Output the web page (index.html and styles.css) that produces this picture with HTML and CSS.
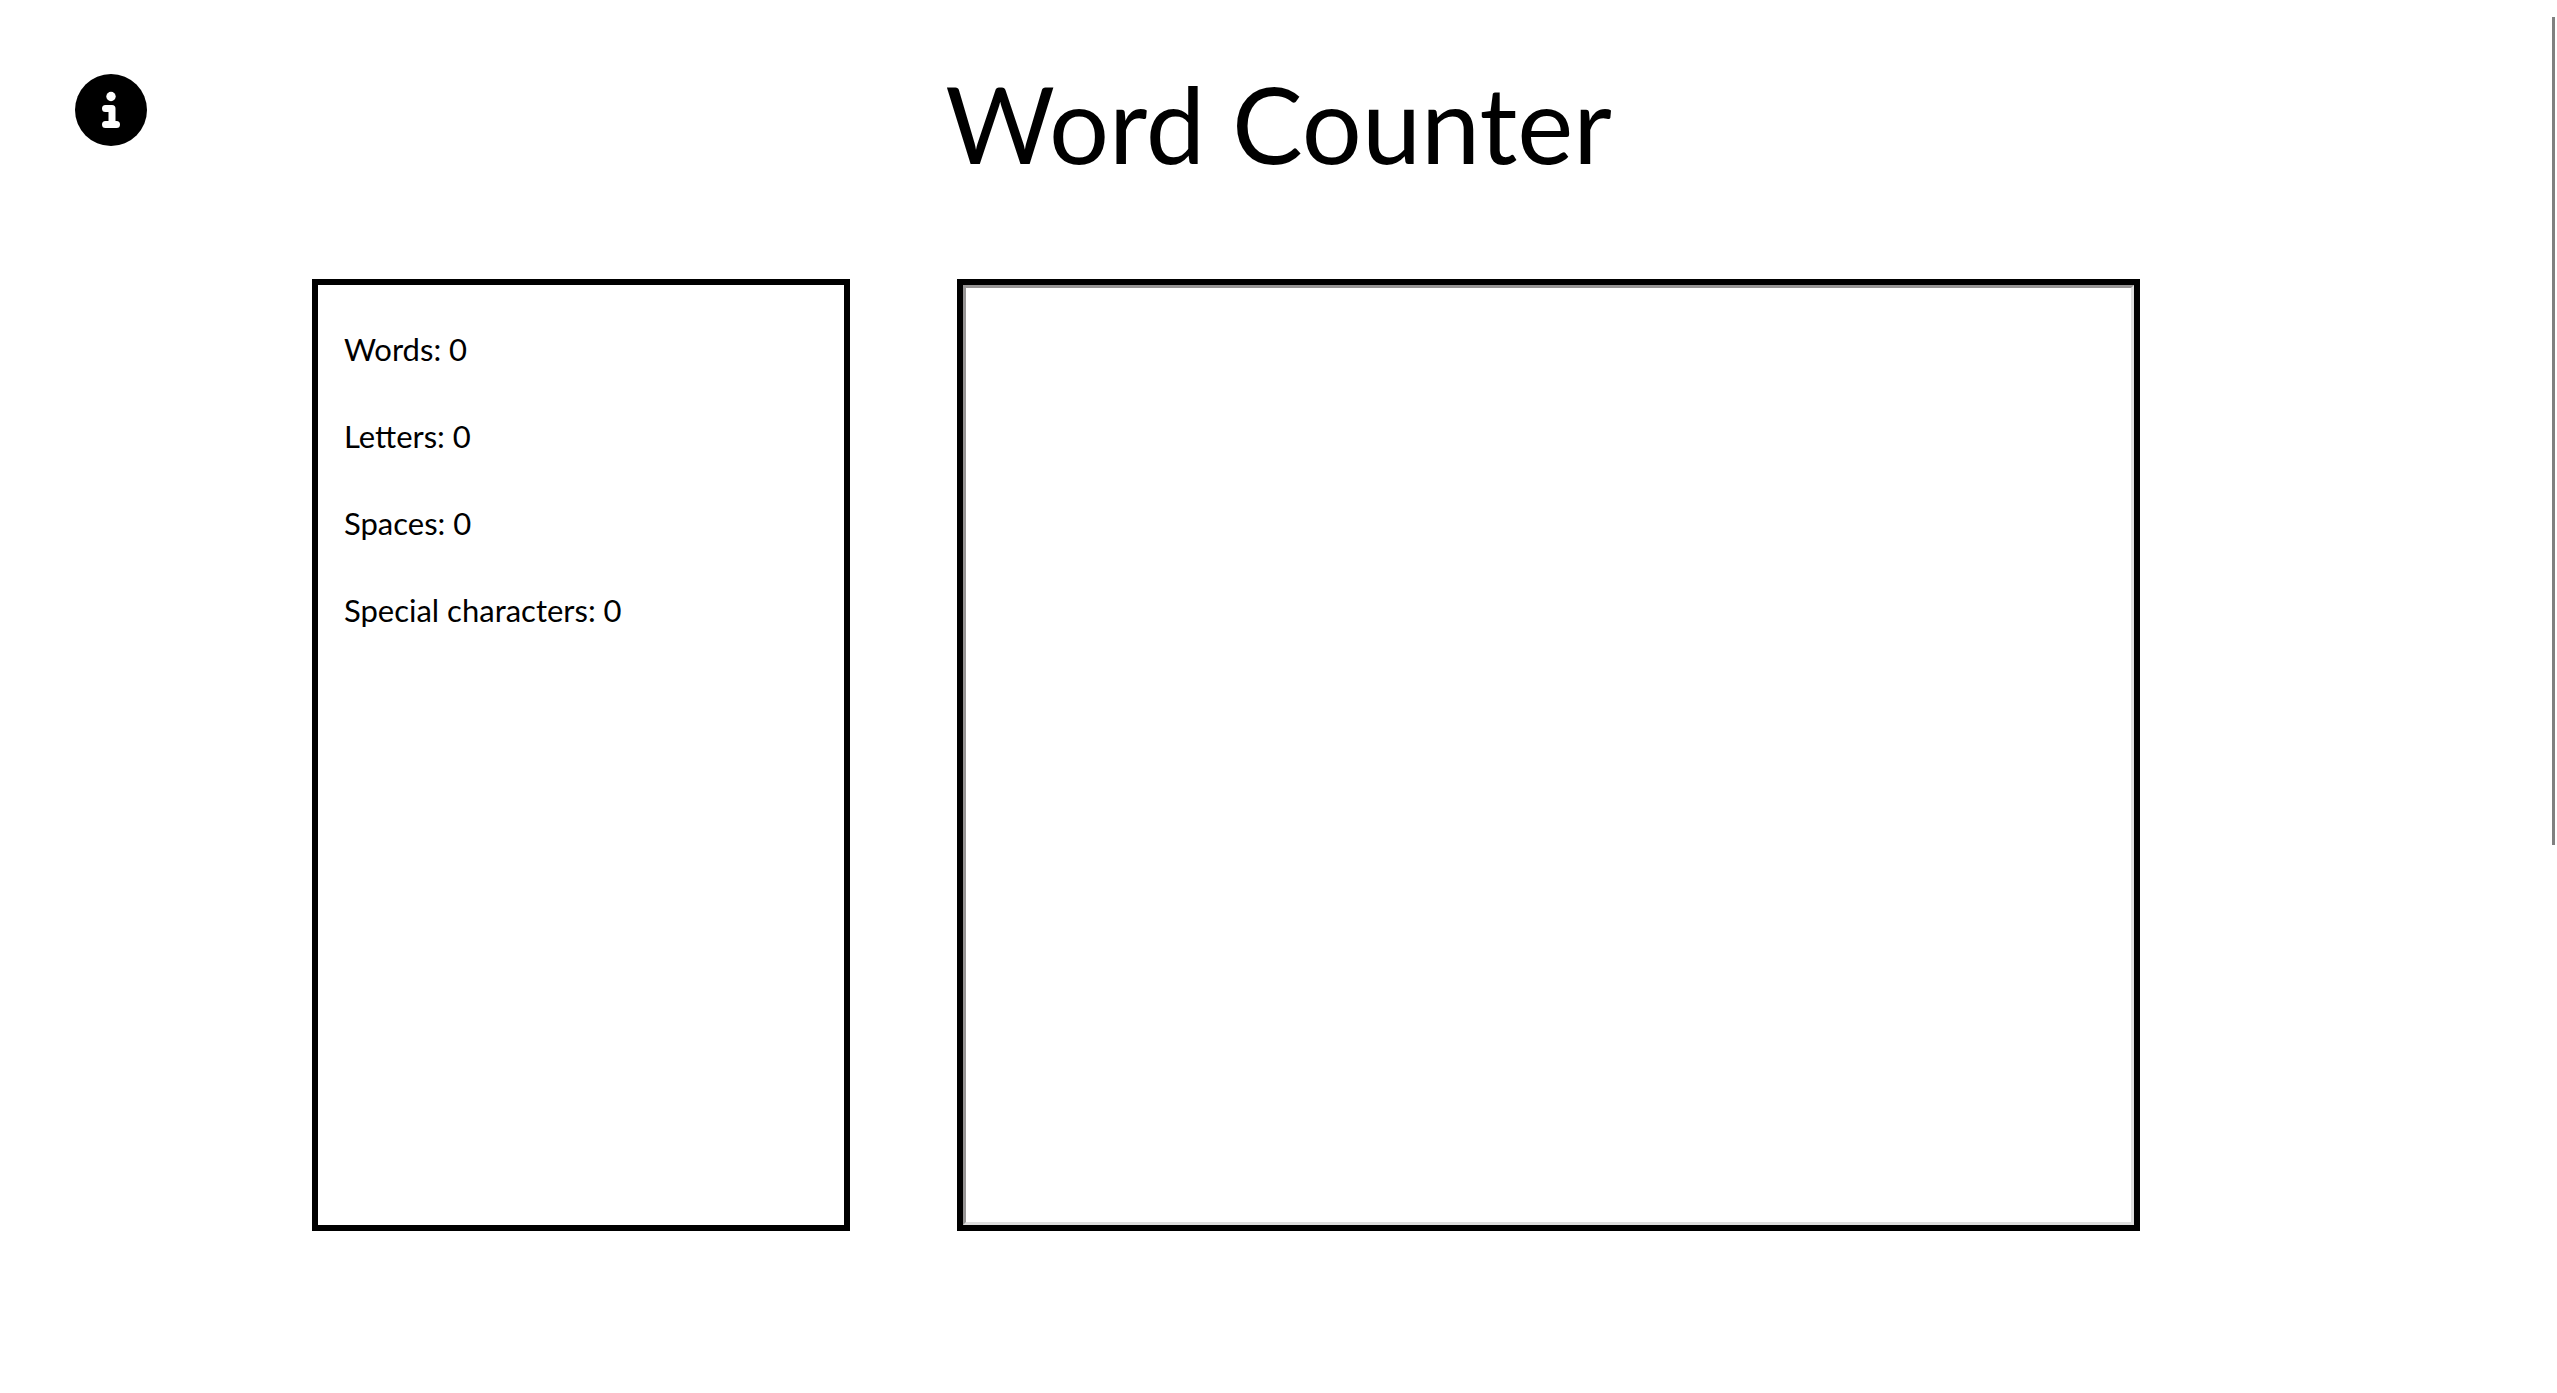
FILE: index.html
```html
<!DOCTYPE html>
<html lang="en">
<head>
<meta charset="utf-8">
<title>Word Counter</title>
<link rel="stylesheet" href="styles.css">
</head>
<body>
<header class="header">
  <button class="info" type="button" aria-label="Information">
    <svg class="info-icon" viewBox="0 0 72 72" aria-hidden="true">
      <circle cx="36" cy="36" r="36" fill="#000"/>
      <circle cx="36" cy="22.500" r="4.700" fill="#fff"/>
      <path d="M30.500 34.500H37V50.500M30.500 50.500H41.500" fill="none" stroke="#fff" stroke-width="7" stroke-linecap="round" stroke-linejoin="round"/>
    </svg>
  </button>
  <h1 class="title">Word Counter</h1>
</header>
<main class="counter">
  <section class="stats" aria-label="Statistics">
    <p class="stat">Words: <span>0</span></p>
    <p class="stat">Letters: <span>0</span></p>
    <p class="stat">Spaces: <span>0</span></p>
    <p class="stat">Special characters: <span>0</span></p>
  </section>
  <div class="editor">
    <textarea class="text" aria-label="Text to count"></textarea>
  </div>
</main>
<div class="scroll-thumb"></div>
</body>
</html>
```
FILE: styles.css
```css
* {
  box-sizing: border-box;
}

body {
  margin: 0;
  min-height: 100vh;
  display: flex;
  flex-direction: column;
  background: #fff;
  color: #000;
  font-family: Lato, "Liberation Sans", sans-serif;
}

.header {
  display: grid;
  grid-template-columns: 72px 1fr 72px;
  align-items: start;
  padding: 74px 75px 107px;
}

.info {
  width: 72px;
  height: 72px;
  padding: 0;
  border: 0;
  border-radius: 50%;
  background: none;
  cursor: pointer;
}

.info-icon {
  display: block;
  width: 100%;
  height: 100%;
}

.title {
  margin: 0;
  font-size: 106px;
  line-height: 98px;
  font-weight: 400;
  text-align: center;
}

.counter {
  flex: 1;
  display: grid;
  grid-template-columns: 538fr 1183fr;
  gap: 107px;
  padding: 0 417px 162px 312px;
}

.stats,
.editor {
  border: 6px solid #000;
}

.stats {
  padding: 44px 26px;
}

.stat {
  margin: 0 0 47px;
  font-size: 31px;
  line-height: 40px;
}

.editor {
  display: flex;
}

.text {
  flex: 1;
  padding: 16px;
  border: 3px solid;
  border-color: #979595 #dedede #dedede #979595;
  outline: 0;
  resize: none;
  background: #fff;
  font: inherit;
  font-size: 31px;
}

.scroll-thumb {
  position: fixed;
  top: 17px;
  right: 2px;
  width: 3px;
  height: 828px;
  background: #808080;
}
```
